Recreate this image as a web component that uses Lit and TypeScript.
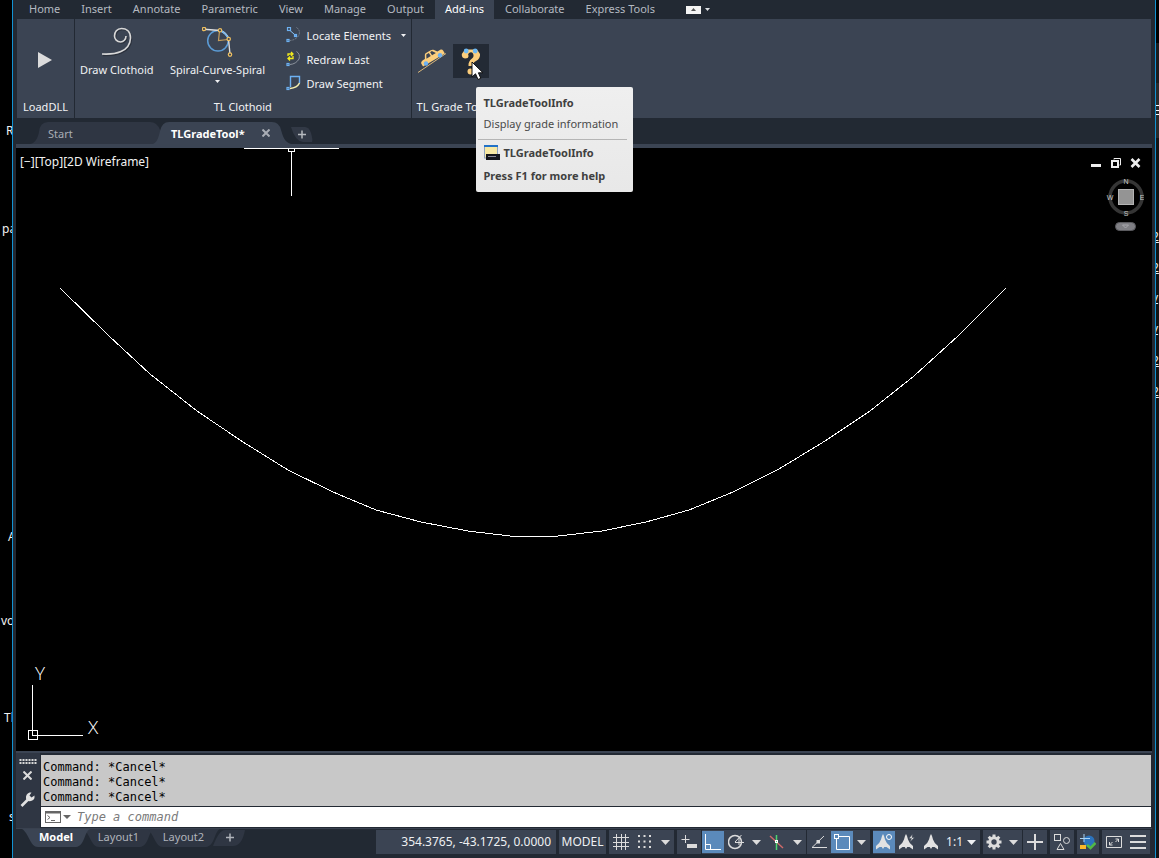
import { LitElement, html, svg, css, TemplateResult } from "lit";
import { customElement, property } from "lit/decorators.js";
import { classMap } from "lit/directives/class-map.js";

const arrow = () => html`<svg class="arrow" width="9" height="5" viewBox="0 0 9 5" aria-hidden="true"><path d="M0 0H9L4.5 5Z" fill="currentColor" /></svg>`;
const smallArrow = () => html`<svg class="arrow" width="5" height="3" viewBox="0 0 5 3" aria-hidden="true"><path d="M0 0H5L2.5 3Z" fill="currentColor" /></svg>`;

const reset = css`
  * { box-sizing: border-box; }
  button {
    font: inherit;
    color: inherit;
    background: none;
    border: 0;
    margin: 0;
    padding: 0;
    white-space: nowrap;
  }
  svg { display: block; flex: none; }
`;

const clothoidIcon = html`<svg width="32" height="30" viewBox="0 0 32 30" fill="none">
  <path d="M2 28.500C15 29 30 26 30.500 12C30.500 5 26 2.500 21.500 2.500C17 2.500 14.500 6 14.500 10C14.500 13 17 16 20.500 16C23.500 16 26 13.500 26 10" stroke="#2a303b" stroke-width="1.500" />
  <path d="M1 27C14 27.800 29 25 29.500 11C29.500 4 25 1.500 20.500 1.500C16 1.500 13.500 5 13.500 9C13.500 12 16 15 19.500 15C22.500 15 25 12.500 25 9" stroke="#d8d8d8" stroke-width="1.600" />
</svg>`;

const node = (x: number, y: number, c: string, s = 3) =>
  svg`<rect x=${x - s / 2} y=${y - s / 2} width=${s} height=${s} fill="#3b4453" stroke=${c} stroke-width="1.200" />`;

const spiralIcon = html`<svg width="32" height="30" viewBox="0 0 32 30" fill="none">
  <circle cx="16" cy="13.700" r="10.300" stroke="#5b9bd5" stroke-width="1.500" />
  <path d="M2 2.200L18 3.500Q25 6 26.500 12L28 27" stroke="#dedede" stroke-width="1.400" />
  <path d="M18 3.500Q24 6 26.500 12" stroke="#7db8ea" stroke-width="1.500" />
  <path d="M17.500 4L16.500 13.500L26 12.500" stroke="#c9a05c" stroke-width="1.200" />
  ${[[2, 2], [18, 3.3], [26.7, 12], [28, 27.6]].map(([x, y]) => svg`<circle cx=${x} cy=${y} r="1.700" fill="#3b4453" stroke="#f0c060" stroke-width="1.200" />`)}
</svg>`;

const locateIcon = html`<svg width="16" height="16" viewBox="0 0 16 16" fill="none">
  <path d="M10.500 0.500Q14.500 3 13 8Q10 13 4 13.500" stroke="#7a828e" stroke-dasharray="2 1" />
  <path d="M4 3.500L8.500 7.500" stroke="#8ec5f5" />
  ${node(3, 2, "#6db1f2")}${node(9.5, 8.5, "#6db1f2", 2)}${node(2, 13.5, "#6db1f2", 2)}
</svg>`;
const redrawIcon = html`<svg width="16" height="16" viewBox="0 0 16 16" fill="none">
  <path d="M10.500 0.500Q14.500 3 13 8Q10 13 4 13.500" stroke="#8b929c" />
  <path d="M2 5V3H6.500M5 1L7 3L5 5M7 5V7.500H2.500M4 5.500L2 7.500L4 9.500" stroke="#f3ec1c" stroke-width="1.300" />
  ${node(2, 13.5, "#6db1f2", 2)}
</svg>`;
const segmentIcon = html`<svg width="16" height="16" viewBox="0 0 16 16" fill="none">
  <path d="M4.500 12V1.500H13.500V8" stroke="#6db1f2" stroke-width="1.400" />
  <path d="M4 13.500Q11 13 13.500 8" stroke="#f4efb0" stroke-width="1.600" />
  ${node(2, 13.5, "#6db1f2", 2)}
</svg>`;
const carIcon = html`<svg width="30" height="26" viewBox="0 0 30 26">
  <path d="M1 24.500L29 5.500" stroke="#d9b67a" stroke-width="1" />
  <g transform="translate(14 8.500) rotate(-31)">
    <path d="M-12 4.500V1Q-12 -0.500 -9 -1H-6.500L-4.500 -4.500Q-4 -5.500 -2.500 -5.500H3Q4.500 -5.500 5.500 -4.500L8 -1H12Q13.500 -0.500 13.500 1V4.500Z" fill="#fcce7c" />
    <path d="M-5 -0.500L-3 -4.200H0V-0.500ZM1.500 -4.200H3.500L6 -0.500H1.500Z" fill="#3b4453" />
  </g>
  <circle cx="9" cy="15.500" r="2.200" fill="#6db1f2" /><circle cx="23" cy="7.300" r="2.200" fill="#6db1f2" />
</svg>`;
const questionIcon = html`<svg width="22" height="28" viewBox="0 0 22 28">
  <path d="M5 2.500H17L20 7Q20.500 11.500 16 14Q12.500 16 12.500 19H8.500Q8 14.500 12 11.500Q14.500 9.500 13 6.500Q11.500 4.500 9 6Q7.500 7 8.500 9Q8.500 11.500 5 11.500Q1.500 11 1.800 7Z" fill="#fcce7c" />
  <circle cx="10.500" cy="24.500" r="3" fill="#fcce7c" />
  <circle cx="6.200" cy="4" r="2.400" fill="#6db8f2" /><circle cx="15.200" cy="4" r="2.400" fill="#6db8f2" />
</svg>`;

@customElement("ribbon-bar")
class RibbonBar extends LitElement {
  static styles = [reset, css`
    :host { display: block; }
    .tabs { display: flex; height: 19px; padding-left: 3px; gap: 1px; color: #b4b9c1; align-items: stretch; }
    .tab { padding: 0 10px 2px; line-height: 17px; }
    .tab.on { background: #3b4453; color: #fff; }
    .collapse { display: flex; align-items: center; gap: 4px; margin-left: 20px; color: #dfe2e6; }
    .chip { display: grid; place-items: center; width: 15px; height: 8px; background: #f4f4f4; color: #555; }
    .panels { display: flex; height: 99px; margin: 0 1px; background: #3b4453; color: #f1f2f4; }
    .panel { display: flex; flex-direction: column; border-right: 1px solid #222933; padding-bottom: 3px; }
    .panel:last-child { border-right: 0; }
    .body { display: flex; flex: 1; }
    .title { text-align: center; line-height: 16px; }
    .load { width: 58px; }
    .load .body { align-items: center; justify-content: center; }
    .load button { padding: 2px 2px 0 0; }
    .clothoid .body { padding: 8px 5px 0; gap: 14px; align-items: flex-start; }
    .big { display: flex; flex-direction: column; align-items: center; }
    .big span { line-height: 16px; margin: 5px 0 2px; }
    .big .wide { width: 100px; }
    .list { display: flex; flex-direction: column; width: 120px; margin-left: 4px; }
    .item { display: flex; align-items: center; height: 24px; gap: 5px; margin: -4px 0 4px; }
    .item .arrow { margin-left: auto; }
    .item + .item { margin-top: -4px; }
    .grade { padding-left: 5px; }
    .grade .body { align-items: flex-start; padding-top: 25px; gap: 5px; }
    .grade .title { text-align: left; }
    .tool { display: grid; place-items: center; width: 31px; height: 34px; }
    .anchor { position: relative; }
    .tool.on { width: 36px; background: #232a35; }
    .cursor { position: absolute; left: 18px; top: 17px; z-index: 3; }
    .tip {
      position: absolute; left: 23px; top: 43px; z-index: 2; width: 157px; padding: 8px 2px 8px;
      background: linear-gradient(#efefef, #e8e8e8); color: #4a4a4a; border-radius: 2px; white-space: nowrap;
    }
    .tip div { padding: 0 6px; line-height: 16px; }
    .tip .desc { padding-top: 5px; }
    .tip hr { border: 0; border-top: 1px solid #b5b5b5; margin: 7px 4px 5px 0; }
    .tip .cmd { display: flex; gap: 4px; align-items: center; margin-bottom: 7px; }
    .tip b { color: #404040; }
  `];
  render() {
    const tabs = ["Home", "Insert", "Annotate", "Parametric", "View", "Manage", "Output", "Add-ins", "Collaborate", "Express Tools"];
    return html`
      <nav class="tabs">
        ${tabs.map((t) => html`<button class=${classMap({ tab: true, on: t === "Add-ins" })}>${t}</button>`)}
        <button class="collapse" aria-label="Minimize ribbon">
          <span class="chip"><svg width="5" height="3" viewBox="0 0 5 3"><path d="M0 3H5L2.500 0Z" fill="currentColor" /></svg></span>${smallArrow()}
        </button>
      </nav>
      <div class="panels">
        <section class="panel load">
          <div class="body"><button aria-label="LoadDLL"><svg width="14" height="16" viewBox="0 0 14 16"><path d="M0 0L14 8L0 16Z" fill="#dcdcdc" /></svg></button></div>
          <div class="title">LoadDLL</div>
        </section>
        <section class="panel clothoid">
          <div class="body">
            <button class="big">${clothoidIcon}<span>Draw Clothoid</span></button>
            <button class="big">${spiralIcon}<span class="wide">Spiral-Curve-Spiral</span>${smallArrow()}</button>
            <div class="list">
              <button class="item">${locateIcon}Locate Elements${smallArrow()}</button>
              <button class="item">${redrawIcon}Redraw Last</button>
              <button class="item">${segmentIcon}Draw Segment</button>
            </div>
          </div>
          <div class="title">TL Clothoid</div>
        </section>
        <section class="panel grade">
          <div class="body">
            <button class="tool" aria-label="TLGradeTool">${carIcon}</button>
            <div class="anchor">
              <button class="tool on" aria-label="TLGradeToolInfo">${questionIcon}</button>
              <svg class="cursor" width="14" height="20" viewBox="0 0 14 20"><path d="M1 1V16L4.500 12.800L7 18.500L9.800 17.300L7.400 11.800H12Z" fill="#fff" stroke="#111" stroke-width="1" /></svg>
              <div class="tip" role="tooltip">
                <div><b>TLGradeToolInfo</b></div>
                <div class="desc">Display grade information</div>
                <hr />
                <div class="cmd">
                  <svg width="16" height="16" viewBox="0 0 16 16"><rect x="0.500" y="1" width="13" height="12" fill="#f8e9a4" stroke="#8fa3c0" /><rect width="14" height="2" fill="#2272c8" /><path d="M2 9H16V15H2Z" fill="#15161c" /><path d="M4 11.500H12" stroke="#8a8a9a" /></svg>
                  <b>TLGradeToolInfo</b>
                </div>
                <div><b>Press F1 for more help</b></div>
              </div>
            </div>
          </div>
          <div class="title">TL Grade Tools</div>
        </section>
      </div>`;
  }
}

@customElement("file-tabs")
class FileTabs extends LitElement {
  static styles = [reset, css`
    :host { display: flex; align-items: flex-end; height: 30px; padding-left: 14px; border-bottom: 4px solid #3b4453; }
    .tab { display: grid; align-items: center; height: 22px; margin-right: -10px; }
    .tab > * { grid-area: 1 / 1; }
    .start { color: #a9adb5; }
    .active { color: #fff; font-weight: 700; z-index: 1; }
    .label { display: flex; align-items: center; gap: 17px; padding-left: 18px; }
    .add { margin: 0 0 1px 10px; height: 18px; }
  `];
  render() {
    return html`
      <button class="tab start">
        <svg width="133" height="22" viewBox="0 0 133 22"><path d="M0 22C6 21 8 15 9 10Q10 0 18 0H120Q127 0 130 8L133 22Z" fill="#2f3643" /></svg>
        <span class="label">Start</span>
      </button>
      <div class="tab active">
        <svg width="138" height="22" viewBox="0 0 138 22"><path d="M0 22C5 20 6 13 7 9Q9 0 16 0H119Q126 0 128 8C130 14 131 20 138 22Z" fill="#3b4453" /></svg>
        <span class="label">TLGradeTool*
          <button aria-label="Close tab"><svg width="8" height="8" viewBox="0 0 8 8"><path d="M0.500 0.500L7.500 7.500M7.500 0.500L0.500 7.500" stroke="#a9adb5" stroke-width="2" /></svg></button>
        </span>
      </div>
      <button class="add" aria-label="New tab"><svg width="22" height="15" viewBox="0 0 22 15">
        <path d="M0 0H14Q18 0 20 6Q22 13 21 15H12Q4 14 0 0Z" fill="#323946" /><path d="M7 7.500H15M11 3.500V11.500" stroke="#b6babf" stroke-width="1.500" /></svg></button>`;
  }
}

@customElement("drawing-canvas")
class DrawingCanvas extends LitElement {
  static styles = [reset, css`
    :host { display: grid; grid-template: minmax(0, 1fr) / minmax(0, 1fr); background: #000; color: #f2f2f2; min-height: 0; }
    :host > * { grid-area: 1 / 1; }
    .drawing { width: 100%; height: 100%; }
    .ucs { align-self: end; margin: 0 0 7px 9px; font: 300 19px "Open Sans", sans-serif; }
    .view { align-self: start; justify-self: start; padding: 6px 4px; font-size: 12px; line-height: 16px; z-index: 1; }
    .corner { justify-self: end; align-self: start; display: flex; flex-direction: column; align-items: flex-end; padding: 9px 8px 0 0; gap: 7px; }
    .controls { display: flex; gap: 8px; margin-right: 3px; }
    .compass { font: 7px "Liberation Sans", sans-serif; }
  `];
  render() {
    return html`
      <svg class="drawing" fill="none" stroke="#fff" shape-rendering="crispEdges">
        <path d="M44 140L92 187L134 226L181 263L227 294L272 322L317 344L360 362L405 374L452 383L494 388H542L586 383L630 374L673 362L717 344L763 321L809 293L854 263L898 228L942 188L990 140" />
        <path d="M228 0.500H323M272.500 0V3.500H278.500V0M275.500 3V48" />
      </svg>
      <button class="view">[−][Top][2D Wireframe]</button>
      <svg class="ucs" width="80" height="80" viewBox="0 0 80 80" stroke="#fff" fill="none">
        <path d="M7.500 21V71.500H58M3.500 66.500H12.500V75.500H3.500Z" shape-rendering="crispEdges" />
        <text x="10" y="16" fill="#fff" stroke="none">Y</text>
        <text x="63" y="70" fill="#fff" stroke="none">X</text>
      </svg>
      <div class="corner">
        <div class="controls">
          <button aria-label="Minimize"><svg width="12" height="12" viewBox="0 0 12 12"><path d="M1 8.500H11" stroke="#eee" stroke-width="3" /></svg></button>
          <button aria-label="Restore"><svg width="12" height="12" viewBox="0 0 12 12" fill="none" stroke="#eee"><path d="M4 2.500V1.500H10.500V8H9.500" /><path d="M2 4H8V10H2Z" stroke-width="2" /></svg></button>
          <button aria-label="Close"><svg width="11" height="12" viewBox="0 0 11 12"><path d="M1.500 2L9.500 10M9.500 2L1.500 10" stroke="#eee" stroke-width="2.600" /></svg></button>
        </div>
        <svg class="compass" width="38" height="56" viewBox="0 0 38 56" fill="#c8c8c8" text-anchor="middle">
          <circle cx="20" cy="21" r="16" fill="none" stroke="#353535" stroke-width="3.500" />
          <rect x="12.500" y="13.500" width="15" height="15" fill="#949494" stroke="#b4b4b4" />
          <text x="20" y="8">N</text><text x="20" y="40">S</text><text x="4" y="24">W</text><text x="36" y="24">E</text>
          <rect x="9.500" y="46.500" width="20" height="8" rx="4" fill="#7f7f84" stroke="#5a5a5e" />
          <path d="M16.500 49L19.500 52L22.500 49Z" fill="none" stroke="#a9a9ae" />
        </svg>
      </div>`;
  }
}

@customElement("command-window")
class CommandWindow extends LitElement {
  static styles = [reset, css`
    :host { display: grid; grid-template-columns: 24px minmax(0, 1fr); border-top: 2px solid #3b4453; padding: 0 1px 0 0; font: 12px "DejaVu Sans Mono", monospace; }
    .side { display: flex; flex-direction: column; align-items: center; background: #2f3643; padding: 6px 1px 0 0; gap: 7px; }
    .side button:last-child { margin-top: 5px; }
    .main { border: 1px solid #222933; border-width: 2px 0 1px 1px; }
    .log { background: #c8c8c8; color: #000; padding: 5px 2px 1px; height: 51px; margin: 0; font: inherit; line-height: 15px; }
    .entry { display: flex; align-items: center; background: #fff; height: 21px; border-top: 1px solid #222933; padding-left: 4px; gap: 2px; color: #555; }
    input { flex: 1; border: 0; outline: 0; padding: 0 0 0 4px; font: inherit; font-style: italic; background: none; color: #222; }
    input::placeholder { color: #7a7a7a; opacity: 1; }
    .recent { display: flex; align-items: center; gap: 2px; }
  `];
  render() {
    return html`
      <div class="side">
        <svg width="18" height="5" viewBox="0 0 18 5" stroke="#d8d8d8" stroke-width="2" stroke-dasharray="2 1"><path d="M0.500 1H18M0.500 4H18" /></svg>
        <button aria-label="Close command line"><svg width="9" height="9" viewBox="0 0 9 9"><path d="M0.500 0.500L8.500 8.500M8.500 0.500L0.500 8.500" stroke="#dcdcdc" stroke-width="2" /></svg></button>
        <button aria-label="Customize"><svg width="15" height="15" viewBox="0 0 15 15"><path d="M1.500 14L8 7.500" stroke="#e2e2e2" stroke-width="2.600" /><path d="M6 6.500Q5.500 2 9.500 0.500L11.500 0.500L9.500 3.500L11.500 5.500L14.500 3.500Q15 8 11 9Q8.500 9.500 7 8.500Z" fill="#e2e2e2" /></svg></button>
      </div>
      <div class="main">
        <pre class="log">Command: *Cancel*
Command: *Cancel*
Command: *Cancel*</pre>
        <div class="entry">
          <button class="recent" aria-label="Recent commands">
            <svg width="16" height="12" viewBox="0 0 16 12" fill="none" stroke="#666"><rect x="0.500" y="0.500" width="15" height="11" /><path d="M0 1.500H16" stroke-width="2" /><path d="M2.500 4.500L5 6.500L2.500 8.500M6 9.500H10" /></svg>
            <svg width="8" height="4" viewBox="0 0 8 4"><path d="M0 0H8L4 4Z" fill="#666" /></svg>
          </button>
          <input type="text" placeholder="Type a command" aria-label="Command" />
        </div>
      </div>`;
  }
}

const ic = (body: unknown, w = 16) => html`<svg width=${w} height="16" viewBox="0 0 ${w} 16" fill="none" stroke="#dcdcdc">${body}</svg>`;
const person = svg`<path d="M7 0Q8 1 9 5.500Q10 9 14 12V15.500L10.500 13H8.200L7 15L5.800 13H3.500L0 15.500V12Q4 9 5 5.500Q6 1 7 0Z" fill="#e2e2e2" stroke="none" />`;
const dots = [2, 7.5, 13].flatMap((x) => [2, 7.5, 13].map((y) => svg`<rect x=${x - 1} y=${y - 1} width="2" height="2" fill="#dcdcdc" stroke="none" />`));

@customElement("status-button")
class StatusButton extends LitElement {
  @property() label = "";
  @property({ type: Boolean }) on = false;
  @property({ attribute: false }) icon?: TemplateResult;
  static styles = [reset, css`
    :host { display: block; }
    button { display: grid; place-items: center; width: 100%; height: 22px; margin: 1px 0; }
    .on { background: #5b8abb; }
  `];
  render() {
    return html`<button class=${classMap({ on: this.on })} aria-label=${this.label} aria-pressed=${this.on ? "true" : "false"}>${this.icon}</button>`;
  }
}

@customElement("bottom-bar")
class BottomBar extends LitElement {
  static styles = [reset, css`
    :host { display: flex; justify-content: space-between; align-items: flex-start; height: 30px; border-top: 1px solid #39414f; }
    .layouts { display: flex; padding-left: 6px; color: #b0b4bb; }
    .layout { display: grid; align-items: center; justify-items: center; height: 18px; margin-right: -7px; line-height: 16px; }
    .layout > * { grid-area: 1 / 1; }
    .layout span { padding-bottom: 2px; }
    .on { color: #fff; font-weight: 700; z-index: 1; }
    .status { display: flex; gap: 3px; padding: 1px 2px 0 0; color: #eef0f2; }
    .group { display: flex; align-items: stretch; height: 24px; background: #3b4453; }
    .coords { width: 180px; padding-right: 5px; font-size: 12px; justify-content: flex-end; line-height: 24px; }
    .model { width: 47px; font-size: 12px; line-height: 24px; justify-content: center; }
    .menu { display: grid; place-items: center; width: 17px; color: #dcdcdc; }
    .scale { display: flex; align-items: center; gap: 4px; padding: 0 4px 0 3px; font-size: 12px; line-height: 24px; }
    .b { width: 24px; }
    .n { width: 22px; }
    .tight { margin-left: -2px; }
  `];
  layout(label: string, w: number, on = false) {
    return html`<button class=${classMap({ layout: true, on })}>
      <svg width=${w} height="18" viewBox="0 0 ${w} 18"><path d="M0 0H${w}C${w - 6} 3 ${w - 5} 17 ${w - 14} 18H16C8 18 7 4 0 0Z" fill=${on ? "#3b4453" : "#2f3643"} /></svg><span>${label}</span></button>`;
  }
  b(label: string, body: unknown, cls = "b", on = false, w = 16) {
    return html`<status-button class=${cls} .label=${label} .on=${on} .icon=${ic(body, w)}></status-button>`;
  }
  m(label: string) {
    return html`<button class="menu" aria-label=${label}>${arrow()}</button>`;
  }
  render() {
    return html`
      <nav class="layouts">
        ${this.layout("Model", 68, true)}${this.layout("Layout1", 71)}${this.layout("Layout2", 73)}
        <button class="layout" aria-label="New layout"><svg width="32" height="16" viewBox="0 0 32 16"><path d="M0 16Q6 0 12 0H32Q29 16 20 16Z" fill="#2f3643" /><path d="M13 7.500H21M17 3.500V11.500" stroke="#b0b4bb" stroke-width="1.500" /></svg></button>
      </nav>
      <div class="status">
        <output class="group coords">354.3765, -43.1725, 0.0000</output>
        <button class="group model">MODEL</button>
        <div class="group">
          ${this.b("Grid", svg`<path d="M3.500 0V16M8.500 0V16M12.500 0V16M0 3.500H16M0 8.500H16M0 12.500H16" />`)}
          ${this.b("Snap", dots)}${this.m("Snap settings")}
        </div>
        <div class="group">${this.b("Dynamic input", svg`<path d="M4.500 1V9M0.500 5.500H8.500" /><path d="M6 10H16V14H6Z" fill="#dcdcdc" stroke="none" />`)}</div>
        <div class="group tight">
          ${this.b("Ortho", svg`<path d="M0.500 0V15.500H16M0.500 10.500H5.500V15" stroke="#fff" />`, "n", true)}
          ${this.b("Polar", svg`<circle cx="7" cy="8" r="6.500" stroke-width="1.500" /><path d="M7 8.500H16M7 8L13.500 1M11 4V11" />`, "b")}${this.m("Polar settings")}
          ${this.b("Isometric", svg`<path d="M1 2L14 14" stroke="#d06a6a" stroke-width="1.400" /><path d="M7.500 1V16" stroke="#4fd472" stroke-width="1.500" /><rect x="6.500" y="6.500" width="2" height="2" stroke="#fff" />`, "b")}${this.m("Isometric settings")}
        </div>
        <div class="group tight">
          ${this.b("Object snap tracking", svg`<path d="M13 2L1 13.500H16" /><rect x="5.500" y="6" width="3.500" height="3.500" fill="#dcdcdc" stroke="none" />`)}
          ${this.b("Object snap", svg`<path d="M5 2.500H15.500V15.500H2.500V5" stroke="#fff" /><rect x="0.500" y="0.500" width="4" height="4" stroke="#fff" />`, "n", true)}${this.m("Object snap settings")}
        </div>
        <div class="group">
          ${this.b("Annotation visibility", svg`${person}<circle cx="13" cy="3" r="2.500" fill="#5b8abb" stroke="#fff" />`, "n", true)}
          ${this.b("Auto scale", svg`${person}<path d="M13.500 0L10 4.500H12.500L11 8L15.500 3.500H13Z" fill="#e2e2e2" stroke="#3b4453" stroke-width="0.500" />`)}
          ${this.b("Annotation scale", person, "b", false, 14)}
          <button class="scale">1:1${arrow()}</button>
        </div>
        <div class="group">
          ${this.b("Workspace", svg`<circle cx="8" cy="8" r="4.200" stroke-width="3" /><path d="M8 0.500V3M8 13V15.500M0.500 8H3M13 8H15.500M2.700 2.700L4.500 4.500M11.500 11.500L13.300 13.300M13.300 2.700L11.500 4.500M4.500 11.500L2.700 13.300" stroke-width="3" />`, "n")}${this.m("Workspace menu")}
        </div>
        <div class="group tight">${this.b("Annotation monitor", svg`<path d="M8 0V16M0 8H16" stroke-width="2" />`)}</div>
        <div class="group">${this.b("Isolate objects", svg`<rect x="0.500" y="0.500" width="6" height="6" /><circle cx="12.500" cy="6.500" r="3" /><path d="M6.500 9.500L10 15.500H3Z" />`)}</div>
        <div class="group">${this.b("Graphics performance", svg`<circle cx="9" cy="7" r="5.500" fill="#2b73bd" stroke="none" /><path d="M4 0V8M0 4.500H10" stroke="#a8d3f5" /><rect y="11" width="6" height="4" fill="#fbb829" stroke="none" /><path d="M7 11L10.500 14L15.500 9" stroke="#52b947" stroke-width="2.500" />`, "n")}</div>
        <div class="group">
          ${this.b("Clean screen", svg`<path d="M0.500 2.500H15.500V13.500H0.500Z" /><path d="M9.500 5H12.500V8M12.500 5L9.500 8M3.500 8V11H6.500M3.500 11L6.500 8" />`)}
          ${this.b("Customization", svg`<path d="M0 2H16M0 8H16M0 14H16" stroke-width="2" />`)}
        </div>
      </div>`;
  }
}

const behindLeft: [number, number, string][] = [[6, 123, "R"], [2, 221, "pa"], [8, 529, "A"], [1, 613, "vo"], [4, 710, "Tl"], [9, 809, "s"]];
const behindRight: [number, string][] = [[229, "2"], [260, "2"], [290, "y"], [321, "y"], [353, "2"], [384, "2"]];

@customElement("app-root")
class AppRoot extends LitElement {
  static styles = [reset, css`
    :host { display: grid; grid-template-columns: 12px minmax(0, 1fr) 3px; height: 100vh; overflow: hidden; background: #000; color: #f2f2f2; font: 11px "Noto Sans", "Open Sans", sans-serif; }
    .behind { position: relative; overflow: hidden; font-size: 12px; line-height: 16px; }
    .behind span { position: absolute; }
    .right { background: linear-gradient(#000 43px, #1c1c1c 43px 83px, #2b2b2b 83px 138px, #141414 138px); }
    .right span { left: -4px; text-decoration: underline; }
    .lines { position: absolute; left: 0; top: 105px; }
    .window { display: flex; flex-direction: column; background: #222933; border: solid #1292d2; border-width: 0 1px; padding: 0 3px; min-width: 0; }
    drawing-canvas { flex: 1; }
  `];
  render() {
    return html`
      <div class="behind">${behindLeft.map(([x, y, t]) => html`<span style="left:${x}px;top:${y}px">${t}</span>`)}</div>
      <main class="window">
        <ribbon-bar></ribbon-bar>
        <file-tabs></file-tabs>
        <drawing-canvas></drawing-canvas>
        <command-window></command-window>
        <bottom-bar></bottom-bar>
      </main>
      <div class="behind right">
        <svg class="lines" width="3" height="11" viewBox="0 0 3 11" stroke="#fff"><path d="M0 0.500H3M0 5.500H3M0 9.500H3" /></svg>
        ${behindRight.map(([y, t]) => html`<span style="top:${y}px">${t}</span>`)}
      </div>`;
  }
}
